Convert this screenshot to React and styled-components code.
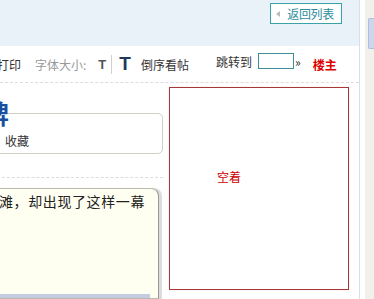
import React from 'react';
import styled, { createGlobalStyle } from 'styled-components';

const GlobalStyle = createGlobalStyle`
    html, body {
        margin: 0;
        padding: 0;
        background: #fff;
        font-family: "Noto Sans CJK SC", "Liberation Sans", sans-serif;
        font-size: 12px;
        color: #333;
    }
`;

const Page = styled.div`
    display: flex;
    width: 374px;
    height: 299px;
    overflow: hidden;
`;

const Main = styled.div`
    width: 359px;
    flex-shrink: 0;
    border-right: 1px solid #d6e0ec;
    display: flex;
    flex-direction: column;
    overflow: hidden;
`;

const Gutter = styled.div`
    width: 5px;
    flex-shrink: 0;
    background: #fff;
`;

const Track = styled.div`
    flex: 1;
    background: #f1f0ea;
    display: flex;
    justify-content: flex-end;
    padding-top: 18px;
`;

const Thumb = styled.div`
    width: 5px;
    height: 29px;
    background: #ccd7ef;
    border: 1px solid #b0bedd;
    border-right: none;
    border-radius: 2px 0 0 2px;
`;

const TopBand = styled.div`
    height: 46px;
    background: #e9f1f9;
    display: flex;
    justify-content: flex-end;
    align-items: flex-start;
    padding: 3px 17px 0 0;
    box-sizing: border-box;
`;

const BackButton = styled.a`
    display: flex;
    align-items: center;
    gap: 7px;
    height: 21px;
    box-sizing: border-box;
    padding: 0 7px 0 5px;
    border: 1px solid #3aa3a8;
    background: #fff;
    color: #2b8c9c;
    font-size: 12px;
    text-decoration: none;
    letter-spacing: -0.3px;
`;

const Arrow = styled.span`
    width: 0;
    height: 0;
    border-top: 3px solid transparent;
    border-bottom: 3px solid transparent;
    border-right: 4px solid #bbb;
`;

const Toolbar = styled.div`
    height: 36px;
    display: flex;
    align-items: center;
    border-bottom: 1px dashed #dcdcdc;
    white-space: nowrap;
`;

const ToolText = styled.span`
    font-size: 12px;
    color: ${(p) => p.$color || '#333'};
    font-weight: ${(p) => (p.$bold ? 700 : 400)};
    margin-left: ${(p) => p.$ml || 0}px;
    position: relative;
    top: ${(p) => p.$shift || 0}px;
`;

const FontT = styled.span`
    font-family: "Liberation Sans", Arial, sans-serif;
    font-weight: 700;
    font-size: ${(p) => p.$size}px;
    color: ${(p) => p.$color};
    margin-left: ${(p) => p.$ml}px;
`;

const Divider = styled.span`
    width: 1px;
    height: 19px;
    background: #d0d0d0;
    margin-left: 5px;
`;

const JumpInput = styled.input`
    width: 36px;
    height: 16px;
    box-sizing: border-box;
    border: 1px solid #3d8e9c;
    margin: 0 0 0 6px;
    padding: 0;
    position: relative;
    top: -3px;
`;

const Body = styled.div`
    flex: 1;
    display: flex;
    gap: 6px;
    margin-left: -8px;
`;

const LeftCol = styled.div`
    width: 171px;
    flex-shrink: 0;
    display: flex;
    flex-direction: column;
`;

const Title = styled.h1`
    margin: 17px 0 0 -9px;
    font-size: 26px;
    line-height: 26px;
    font-weight: 700;
    color: #1a4f9f;
    position: relative;
    z-index: 1;
`;

const InfoBox = styled.div`
    margin-top: -13px;
    height: 41px;
    box-sizing: border-box;
    border: 1px solid #d2cfc6;
    border-radius: 5px;
    display: flex;
    align-items: flex-end;
    padding: 0 0 4px 12px;
`;

const Rule = styled.div`
    margin-top: 23px;
    border-top: 1px dashed #dcdcdc;
`;

const Post = styled.div`
    margin-top: 10px;
    flex: 1;
    background: #fefff0;
    border: 1px solid #b9b9b0;
    border-right-color: #999;
    border-radius: 0 8px 0 0;
    box-shadow: 3px 0 0 #dcdcdc;
    margin-right: 4px;
    display: flex;
    flex-direction: column;
`;

const PostText = styled.p`
    margin: 3px 0 0 6px;
    font-size: 14px;
    line-height: 18px;
    letter-spacing: 0.6px;
    color: #222;
    white-space: nowrap;
`;

const QuoteBar = styled.div`
    margin-top: auto;
    width: 157px;
    height: 4px;
    background: #c4cce0;
`;

const AdBox = styled.div`
    margin-top: 4px;
    width: 180px;
    height: 203px;
    box-sizing: border-box;
    border: 1px solid #a83838;
    box-shadow: 0 0 1px #f4c6c6;
    padding: 80px 0 0 47px;
    color: #c00;
    font-size: 12px;
`;

const App = () => {
    return (
        <>
            <GlobalStyle />
            <Page>
                <Main>
                    <TopBand>
                        <BackButton href="#">
                            <Arrow />
                            返回列表
                        </BackButton>
                    </TopBand>
                    <Toolbar>
                        <ToolText $ml={-3}>打印</ToolText>
                        <ToolText $ml={14} $color="#999">字体大小:</ToolText>
                        <FontT $size={13} $color="#555" $ml={12}>T</FontT>
                        <Divider />
                        <FontT $size={19} $color="#1d3a5c" $ml={7}>T</FontT>
                        <ToolText $ml={10}>倒序看帖</ToolText>
                        <ToolText $ml={27} $shift={-3}>跳转到</ToolText>
                        <JumpInput type="text" />
                        <ToolText $ml={1} $shift={-3}>»</ToolText>
                        <ToolText $ml={12} $color="#d00" $bold>楼主</ToolText>
                    </Toolbar>
                    <Body>
                        <LeftCol>
                            <Title>牌</Title>
                            <InfoBox>收藏</InfoBox>
                            <Rule />
                            <Post>
                                <PostText>滩，却出现了这样一幕</PostText>
                                <QuoteBar />
                            </Post>
                        </LeftCol>
                        <AdBox>空着</AdBox>
                    </Body>
                </Main>
                <Gutter />
                <Track>
                    <Thumb />
                </Track>
            </Page>
        </>
    );
};

export default App;
